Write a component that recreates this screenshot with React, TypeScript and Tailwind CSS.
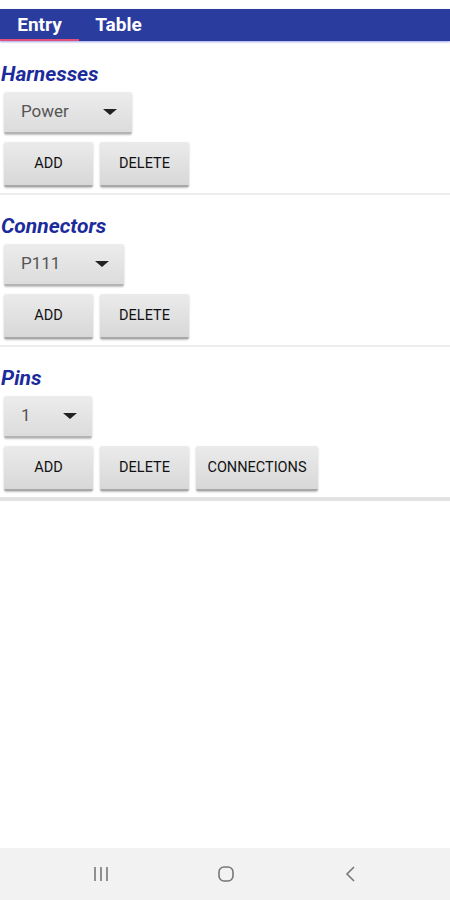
import type { ReactNode } from 'react';

function Spinner({ value, width }: { value: string; width: string }) {
  return (
    <div
      className={`${width} ml-1 flex h-[42px] items-center justify-between rounded-[2px] border-b-2 border-[#b4b4b4] bg-gradient-to-b from-[#ececec] to-[#dcdcdc] pl-[17px] pr-[15px] shadow-[0_1px_2px_rgba(0,0,0,0.25)]`}
    >
      <span className="text-[17px] text-[#555]">{value}</span>
      <span className="h-0 w-0 border-x-[7px] border-t-[6px] border-x-transparent border-t-[#222]" />
    </div>
  );
}

function Btn({ children, width = 'w-[89px]' }: { children: ReactNode; width?: string }) {
  return (
    <button className={`${width} h-[45px] rounded-[2px] border-b-2 border-[#a8a8a8] bg-gradient-to-b from-[#ebebeb] to-[#d8d8d8] text-[14.5px] text-[#111] shadow-[0_1px_2px_rgba(0,0,0,0.25)]`}>
      {children}
    </button>
  );
}

function Section({ title, value, spinW, extra, thick }: { title: string; value: string; spinW: string; extra?: boolean; thick?: boolean }) {
  return (
    <section>
      <h2 className="pl-[1px] pt-[19px] text-[21px] font-bold italic leading-[24px] text-[#1c2b9b]">{title}</h2>
      <div className="mt-[6px]">
        <Spinner value={value} width={spinW} />
      </div>
      <div className="mt-[8px] flex gap-[7px] pl-1">
        <Btn>ADD</Btn>
        <Btn>DELETE</Btn>
        {extra && <Btn width="w-[122px]">CONNECTIONS</Btn>}
      </div>
      <div className={thick ? 'mt-[6px] h-1 bg-[#e2e2e2]' : 'mt-[6px] h-[2px] bg-[#ececec]'} />
    </section>
  );
}

export default function App() {
  return (
    <div className="flex h-[900px] w-[450px] flex-col bg-white font-['Roboto',sans-serif]">
      <div className="h-[9px]" />
      <nav className="flex h-[32px] bg-[#2b3c9f] shadow-[0_1px_2px_rgba(60,70,200,0.5)]">
        <div className="relative flex w-[79px] items-center justify-center">
          <span className="text-[19px] font-bold text-white">Entry</span>
          <span className="absolute bottom-0 left-0 h-[2px] w-full bg-[#e0507a]" />
        </div>
        <div className="flex w-[79px] items-center justify-center">
          <span className="text-[19px] font-bold text-white">Table</span>
        </div>
      </nav>
      <main className="flex-1 pt-[2px]">
        <Section title="Harnesses" value="Power" spinW="w-[128px]" />
        <Section title="Connectors" value="P111" spinW="w-[120px]" />
        <Section title="Pins" value="1" spinW="w-[88px]" extra thick />
      </main>
      <footer className="flex h-[52px] items-center justify-center gap-[105px] bg-[#f2f2f2] pl-[1px]">
        <svg width="20" height="18" viewBox="0 0 20 18" fill="none" stroke="#777" strokeWidth="1.6">
          <path d="M4 2v14M10 2v14M16 2v14" />
        </svg>
        <svg width="20" height="20" viewBox="0 0 20 20" fill="none" stroke="#777" strokeWidth="1.6">
          <rect x="3" y="3" width="14" height="14" rx="5" />
        </svg>
        <svg width="20" height="20" viewBox="0 0 20 20" fill="none" stroke="#777" strokeWidth="1.6">
          <path d="M13 3l-7 7 7 7" />
        </svg>
      </footer>
    </div>
  );
}
